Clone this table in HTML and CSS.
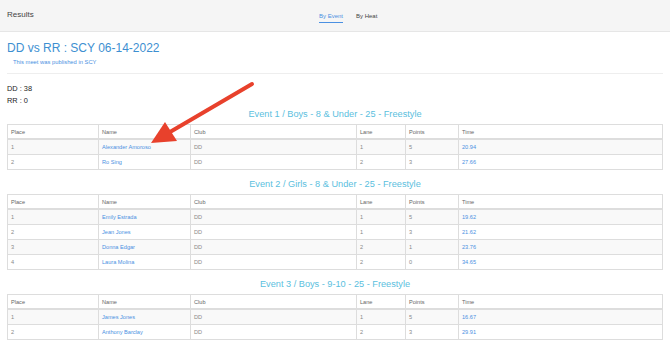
FILE: index.html
```html
<!DOCTYPE html>
<html>
<head>
<meta charset="utf-8">
<link rel="stylesheet" href="styles.css">
</head>
<body>
<header class="topbar">
  <div class="brand">Results</div>
  <nav class="tabs">
    <a class="tab active">By Event</a>
    <a class="tab">By Heat</a>
  </nav>
</header>
<main class="page">
  <h1 class="meet-title">DD vs RR : SCY 06-14-2022</h1>
  <p class="published">This meet was published in SCY</p>
  <hr class="divider">
  <div class="scores">
    <div>DD : 38</div>
    <div>RR : 0</div>
  </div>

  <h2 class="event-title">Event 1 / Boys - 8 &amp; Under - 25 - Freestyle</h2>
  <table class="results">
    <colgroup><col class="c-place"><col class="c-name"><col class="c-club"><col class="c-lane"><col class="c-points"><col class="c-time"></colgroup>
    <thead><tr><th>Place</th><th>Name</th><th>Club</th><th>Lane</th><th>Points</th><th>Time</th></tr></thead>
    <tbody>
      <tr><td>1</td><td><a>Alexander Amoroso</a></td><td>DD</td><td>1</td><td>5</td><td><a>20.94</a></td></tr>
      <tr><td>2</td><td><a>Ro Sing</a></td><td>DD</td><td>2</td><td>3</td><td><a>27.66</a></td></tr>
    </tbody>
  </table>

  <h2 class="event-title">Event 2 / Girls - 8 &amp; Under - 25 - Freestyle</h2>
  <table class="results">
    <colgroup><col class="c-place"><col class="c-name"><col class="c-club"><col class="c-lane"><col class="c-points"><col class="c-time"></colgroup>
    <thead><tr><th>Place</th><th>Name</th><th>Club</th><th>Lane</th><th>Points</th><th>Time</th></tr></thead>
    <tbody>
      <tr><td>1</td><td><a>Emily Estrada</a></td><td>DD</td><td>1</td><td>5</td><td><a>19.62</a></td></tr>
      <tr><td>2</td><td><a>Jean Jones</a></td><td>DD</td><td>1</td><td>3</td><td><a>21.62</a></td></tr>
      <tr><td>3</td><td><a>Donna Edgar</a></td><td>DD</td><td>2</td><td>1</td><td><a>23.76</a></td></tr>
      <tr><td>4</td><td><a>Laura Molina</a></td><td>DD</td><td>2</td><td>0</td><td><a>34.65</a></td></tr>
    </tbody>
  </table>

  <h2 class="event-title">Event 3 / Boys - 9-10 - 25 - Freestyle</h2>
  <table class="results">
    <colgroup><col class="c-place"><col class="c-name"><col class="c-club"><col class="c-lane"><col class="c-points"><col class="c-time"></colgroup>
    <thead><tr><th>Place</th><th>Name</th><th>Club</th><th>Lane</th><th>Points</th><th>Time</th></tr></thead>
    <tbody>
      <tr><td>1</td><td><a>James Jones</a></td><td>DD</td><td>1</td><td>5</td><td><a>16.67</a></td></tr>
      <tr><td>2</td><td><a>Anthony Barclay</a></td><td>DD</td><td>2</td><td>3</td><td><a>29.91</a></td></tr>
    </tbody>
  </table>
</main>
<svg class="arrow" width="670" height="347" viewBox="0 0 670 347">
  <line x1="252" y1="84" x2="170" y2="132" stroke="#e8412c" stroke-width="4" stroke-linecap="round"/>
  <polygon points="151,143 165,122 177,141" fill="#e8412c"/>
</svg>
</body>
</html>
```

FILE: styles.css
```css
html, body {
  margin: 0;
  padding: 0;
  background: #ffffff;
  font-family: "Liberation Sans", Arial, Helvetica, sans-serif;
  color: #333333;
}

.topbar {
  height: 31px;
  background: #f5f5f5;
  border-bottom: 1px solid #e6e6e6;
  display: flex;
  align-items: center;
  position: relative;
  padding: 0 7px;
}

.brand {
  font-size: 8px;
  color: #444444;
  margin-top: -2px;
}

.tabs {
  position: absolute;
  left: 319px;
  top: 0;
  height: 31px;
  display: flex;
  gap: 13px;
}

.tab {
  font-size: 6px;
  color: #444444;
  padding-top: 13px;
  height: 10px;
  box-sizing: content-box;
}

.tab.active {
  color: #4a90e2;
  border-bottom: 1px solid #4a90e2;
  height: 9px;
}

.page {
  padding: 0 7px;
}

.meet-title {
  margin: 0;
  padding-top: 8px;
  font-size: 12px;
  font-weight: normal;
  line-height: 16px;
  color: #3d8fd1;
}

.published {
  margin: 0;
  padding: 2px 0 0 6px;
  font-size: 5.8px;
  line-height: 8px;
  color: #4a90e2;
}

.divider {
  border: 0;
  border-top: 1px solid #eeeeee;
  margin: 7px 0 0 0;
}

.scores {
  font-size: 7.4px;
  line-height: 12px;
  color: #222222;
  padding-top: 9px;
}

.event-title {
  margin: 0;
  text-align: center;
  font-size: 9.2px;
  font-weight: normal;
  line-height: 12px;
  color: #5bc0de;
  padding: 1px 0 4px 0;
}

.results + .event-title {
  padding-top: 8px;
}

.results {
  width: 100%;
  border-collapse: collapse;
  font-size: 5.6px;
  color: #888888;
  border: 1px solid #dddddd;
  table-layout: fixed;
}

.c-place { width: 91px; }
.c-name { width: 92px; }
.c-club { width: 166px; }
.c-lane { width: 49px; }
.c-points { width: 53px; }
.c-time { width: auto; }

.results th,
.results td {
  border: 1px solid #dddddd;
  text-align: left;
  padding: 0 3px;
  height: 14px;
  font-weight: normal;
}

.results th {
  color: #666666;
  border-bottom: 2px solid #dddddd;
  height: 13px;
}

.results tbody tr:nth-child(odd) {
  background: #f9f9f9;
}

.results a {
  color: #4a90e2;
}

.arrow {
  position: absolute;
  left: 0;
  top: 0;
  pointer-events: none;
}
```
